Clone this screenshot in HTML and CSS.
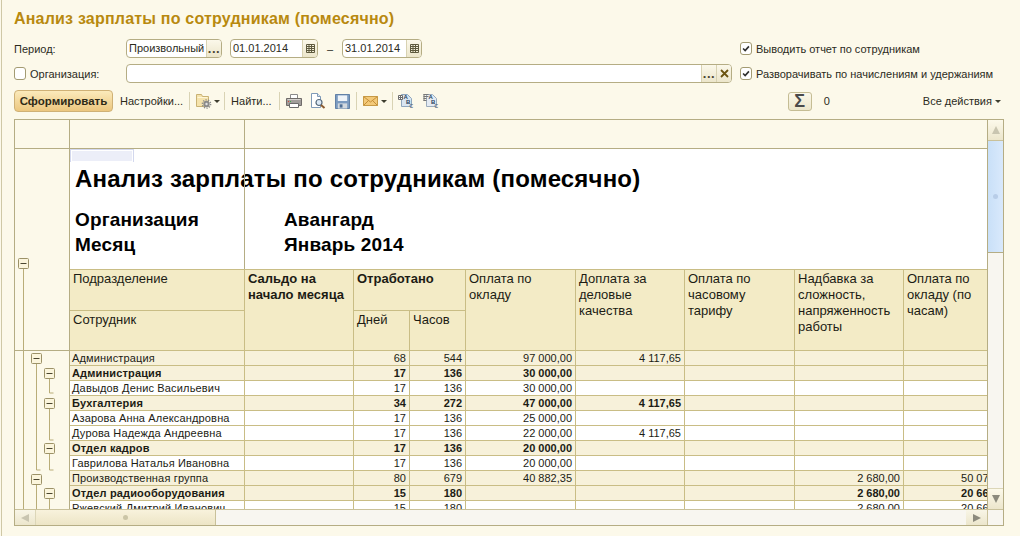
FILE: index.html
```html
<!DOCTYPE html>
<html lang="ru">
<head>
<meta charset="utf-8">
<title>Анализ зарплаты по сотрудникам (помесячно)</title>
<link rel="stylesheet" href="styles.css">
</head>
<body>
<div class="window">
  <h1 class="page-title">Анализ зарплаты по сотрудникам (помесячно)</h1>

  <div class="form-row form-row-first">
    <span class="label">Период:</span>
    <div class="field field-kind"><span class="field-text">Произвольный</span><span class="field-btn dots">...</span></div>
    <div class="field field-date field-from"><span class="field-text">01.01.2014</span><span class="field-btn"><svg class="cal" viewBox="0 0 11 11"><path d="M1.5 1.5h8v8h-8zM1.5 3.5h8M1.5 5.5h8M1.5 7.5h8M4 1.5v8M6.500 1.500v8" fill="none" stroke="#5e5a3e"/></svg></span></div>
    <span class="dash">–</span>
    <div class="field field-date field-to"><span class="field-text">31.01.2014</span><span class="field-btn"><svg class="cal" viewBox="0 0 11 11"><path d="M1.5 1.5h8v8h-8zM1.5 3.500h8M1.5 5.5h8M1.5 7.5h8M4 1.5v8M6.500 1.500v8" fill="none" stroke="#5e5a3e"/></svg></span></div>
    <label class="check check-right"><span class="box"><svg viewBox="0 0 12 12"><path d="M2.500 6l2.500 2.500 4.500-5" fill="none" stroke="#2f2f2f" stroke-width="2"/></svg></span>Выводить отчет по сотрудникам</label>
  </div>

  <div class="form-row form-row-second">
    <label class="check check-org"><span class="box"></span>Организация:</label>
    <div class="field field-org"><span class="field-text"></span><span class="field-btn dots">...</span><span class="field-btn clear"><svg viewBox="0 0 9 9"><path d="M1 1l7 7M8 1l-7 7" stroke="#6b5410" stroke-width="1.800" fill="none"/></svg></span></div>
    <label class="check check-right"><span class="box"><svg viewBox="0 0 12 12"><path d="M2.500 6l2.500 2.500 4.500-5" fill="none" stroke="#2f2f2f" stroke-width="2"/></svg></span>Разворачивать по начислениям и удержаниям</label>
  </div>

  <div class="toolbar">
    <button class="primary">Сформировать</button>
    <span class="tool-text tool-settings">Настройки...</span>
    <i class="sep sep-a"></i>
    <svg class="ico" viewBox="0 0 16 16"><path d="M.5 1.500h5l1 2h6v10H.5z" fill="#f5e3ac" stroke="#c9b274"/><path d="M1.500 4.500h10" stroke="#fff6d6"/><circle cx="10.500" cy="11" r="3.200" fill="#8b8b8b"/><circle cx="10.500" cy="11" r="4.200" fill="none" stroke="#8b8b8b" stroke-dasharray="1.300 1.300" stroke-width="1.300"/><circle cx="10.500" cy="11" r="1.200" fill="#e2e2e2"/></svg>
    <svg class="arrow" viewBox="0 0 6 3"><path d="M0 0h6L3 3z" fill="#3d3d2e"/></svg>
    <i class="sep sep-b"></i>
    <span class="tool-text">Найти...</span>
    <i class="sep sep-c"></i>
    <svg class="ico ico-print" viewBox="0 0 16 16"><path d="M4.500 1.500h7v4h-7z" fill="#fff" stroke="#8a8a8a"/><path d="M.5 5.500h15v7H.5z" fill="#a19d9b" stroke="#6f6b69"/><path d="M1.500 6.500h13" stroke="#d6d4d0"/><path d="M3.500 10.500h9v4h-9z" fill="#fff" stroke="#6c6c6c"/><path d="M2 8.500h1" stroke="#d8463c"/><path d="M4 8.500h1" stroke="#3fae4a"/></svg>
    <svg class="ico ico-prev" viewBox="0 0 16 16"><path d="M1.500.5h6l3 3v11h-9z" fill="#fff" stroke="#7f9ab8"/><path d="M7.500.5v3h3" fill="#dfe8f2" stroke="#7f9ab8"/><circle cx="9" cy="9.500" r="3" fill="#dbe9f6" stroke="#566a7c" stroke-width="1.200"/><path d="M11 12l3.500 3" stroke="#8a5a2e" stroke-width="2"/></svg>
    <svg class="ico ico-save" viewBox="0 0 16 16"><path d="M.5.5h15v15H.5z" fill="#7b9bc0" stroke="#5a7ba2"/><path d="M3 1.500h10v6H3z" fill="#eef3f8"/><path d="M3 10h10v5.500H3z" fill="#d2d9df"/><path d="M5 11h3v3.500H5z" fill="#4e6f96"/></svg>
    <i class="sep sep-d"></i>
    <svg class="ico ico-mail" viewBox="0 0 15 10"><path d="M.5.500h14v9H.500z" fill="#f3c978" stroke="#c79a45"/><path d="M.5.500l7 5.500 7-5.500M.5 9.500l5-5M14.500 9.500l-5-5" fill="none" stroke="#c58f38"/></svg>
    <svg class="arrow arrow-mail" viewBox="0 0 6 3"><path d="M0 0h6L3 3z" fill="#3d3d2e"/></svg>
    <i class="sep sep-e"></i>
    <svg class="ico ico-abc1" viewBox="0 0 16 16"><path d="M3.500 1.500h6l4 4v8h-10z" fill="#d9e5f1" stroke="#8fa6bd"/><path d="M.5 2.500h4v4h-4zM2.500 2.500v4M.5 4.500h4" fill="#fff" stroke="#6d6d6d"/><text x="5.500" y="5.500" class="mini">A</text><text x="8" y="10.500" class="mini">B</text><text x="11.500" y="15" class="mini mini-c">C</text></svg>
    <svg class="ico ico-abc2" viewBox="0 0 16 16"><path d="M3.500 1.500h6l4 4v8h-10z" fill="#e4ebf3" stroke="#9cacbc"/><path d="M.5 1.500h5M.5 3.500h5M.5 5.500h3M.5 7.500h3M1 1v7" fill="none" stroke="#777"/><text x="5.500" y="5.500" class="mini">A</text><text x="8" y="10.500" class="mini">B</text><text x="11.500" y="15" class="mini mini-c">C</text></svg>
    <button class="sigma">Σ</button>
    <span class="tool-text sum">0</span>
    <span class="tool-text all">Все действия</span>
    <svg class="arrow arrow-all" viewBox="0 0 6 3"><path d="M0 0h6L3 3z" fill="#3d3d2e"/></svg>
  </div>

  <div class="report">
    <div class="report-main">
      <div class="viewport">
        <div class="strip">
          <div class="strip-gutter"></div>
          <div class="strip-col"></div>
          <div class="strip-rest"></div>
        </div>
        <div class="content">
          <svg class="tree" viewBox="0 0 54 360" width="54" height="360">
            <g fill="none" stroke="#b9ad78">
              <path d="M8.500 119v241M21.500 214v107h4M34.500 229v15h4M34.500 259v32h4M34.500 304v17h4M21.500 335v25M34.500 349v11"/>
            </g>
            <path d="M0 201.500h54" stroke="#b5ad84"/>
            <g class="node"><rect x="3.500" y="109.500" width="10" height="10" rx="1"/><path d="M5.500 114.500h6"/></g>
            <g class="node"><rect x="16.500" y="204.500" width="10" height="10" rx="1"/><path d="M18.500 209.500h6"/></g>
            <g class="node"><rect x="29.500" y="219.500" width="10" height="10" rx="1"/><path d="M31.500 224.500h6"/></g>
            <g class="node"><rect x="29.500" y="249.500" width="10" height="10" rx="1"/><path d="M31.500 254.500h6"/></g>
            <g class="node"><rect x="29.500" y="294.500" width="10" height="10" rx="1"/><path d="M31.500 299.500h6"/></g>
            <g class="node"><rect x="16.500" y="325.500" width="10" height="10" rx="1"/><path d="M18.500 330.500h6"/></g>
            <g class="node"><rect x="29.500" y="339.500" width="10" height="10" rx="1"/><path d="M31.500 344.500h6"/></g>
          </svg>
          <div class="sheet">
            <div class="sheet-head">
              <div class="cell-mark"></div>
              <h2 class="report-title">Анализ зарплаты по сотрудникам (помесячно)</h2>
              <div class="meta"><span>Организация</span><span>Авангард</span><span>Месяц</span><span>Январь 2014</span></div>
            </div>
            <table class="data">
              <colgroup>
                <col class="c175"><col class="c109"><col class="c56"><col class="c56"><col class="c110"><col class="c109"><col class="c110"><col class="c109"><col class="c110">
              </colgroup>
              <thead>
                <tr class="h1">
                  <th>Подразделение</th>
                  <th rowspan="2" class="b">Сальдо на начало месяца</th>
                  <th colspan="2" class="b">Отработано</th>
                  <th rowspan="2">Оплата по окладу</th>
                  <th rowspan="2">Доплата за деловые качества</th>
                  <th rowspan="2">Оплата по часовому тарифу</th>
                  <th rowspan="2">Надбавка за сложность, напряженность работы</th>
                  <th rowspan="2">Оплата по окладу (по часам)</th>
                </tr>
                <tr class="h2">
                  <th>Сотрудник</th>
                  <th>Дней</th>
                  <th>Часов</th>
                </tr>
              </thead>
              <tbody>
                <tr class="tint"><td>Администрация</td><td></td><td>68</td><td>544</td><td>97 000,00</td><td>4 117,65</td><td></td><td></td><td></td></tr>
                <tr class="tint bold"><td>Администрация</td><td></td><td>17</td><td>136</td><td>30 000,00</td><td></td><td></td><td></td><td></td></tr>
                <tr><td>Давыдов Денис Васильевич</td><td></td><td>17</td><td>136</td><td>30 000,00</td><td></td><td></td><td></td><td></td></tr>
                <tr class="tint bold"><td>Бухгалтерия</td><td></td><td>34</td><td>272</td><td>47 000,00</td><td>4 117,65</td><td></td><td></td><td></td></tr>
                <tr><td>Азарова Анна Александровна</td><td></td><td>17</td><td>136</td><td>25 000,00</td><td></td><td></td><td></td><td></td></tr>
                <tr><td>Дурова Надежда Андреевна</td><td></td><td>17</td><td>136</td><td>22 000,00</td><td>4 117,65</td><td></td><td></td><td></td></tr>
                <tr class="tint bold"><td>Отдел кадров</td><td></td><td>17</td><td>136</td><td>20 000,00</td><td></td><td></td><td></td><td></td></tr>
                <tr><td>Гаврилова Наталья Ивановна</td><td></td><td>17</td><td>136</td><td>20 000,00</td><td></td><td></td><td></td><td></td></tr>
                <tr class="tint"><td>Производственная группа</td><td></td><td>80</td><td>679</td><td>40 882,35</td><td></td><td></td><td>2 680,00</td><td>50 070,00</td></tr>
                <tr class="tint bold"><td>Отдел радиооборудования</td><td></td><td>15</td><td>180</td><td></td><td></td><td></td><td>2 680,00</td><td>20 660,00</td></tr>
                <tr><td>Ржевский Дмитрий Иванович</td><td></td><td>15</td><td>180</td><td></td><td></td><td></td><td>2 680,00</td><td>20 660,00</td></tr>
              </tbody>
            </table>
          </div>
        </div>
      </div>
      <div class="vscroll">
        <div class="sb-btn sb-up"><svg viewBox="0 0 8 8"><path d="M4 0l4 8H0z" fill="#c9c5b0"/></svg></div>
        <div class="sb-vthumb"><i class="grip"></i></div>
        <div class="sb-track"></div>
        <div class="sb-btn sb-down"><svg viewBox="0 0 8 8"><path d="M4 8L0 0h8z" fill="#8c8a7c"/></svg></div>
      </div>
    </div>
    <div class="hscroll">
      <div class="sb-hbtn"><svg viewBox="0 0 8 8"><path d="M0 4l8-4v8z" fill="#c9c5b0"/></svg></div>
      <div class="sb-hthumb"><i class="grip grip-h"></i></div>
      <div class="sb-htrack"></div>
      <div class="sb-hbtn sb-hbtn-r"><svg viewBox="0 0 8 8"><path d="M8 4L0 0v8z" fill="#8c8a7c"/></svg></div>
      <div class="sb-corner"></div>
    </div>
  </div>
</div>
</body>
</html>
```

FILE: styles.css
```css
* { box-sizing: border-box; }
html, body { margin: 0; padding: 0; }
body {
  width: 1020px;
  height: 536px;
  overflow: hidden;
  background: #fcf9ea;
  font-family: "Liberation Sans", Arial, sans-serif;
  font-size: 11px;
  color: #2b2b1c;
}
.window {
  margin-left: 1px;
  height: 536px;
  border-left: 1px solid #cfc8a6;
  padding-left: 12px;
}
.page-title {
  margin: 0;
  padding-top: 9px;
  height: 39px;
  font-size: 16px;
  line-height: 20px;
  font-weight: bold;
  color: #b8890f;
  letter-spacing: 0.2px;
}
.form-row { display: flex; align-items: center; height: 19px; position: relative; }
.form-row-second { margin-top: 6px; }
.label { width: 112px; }
.field {
  display: flex;
  height: 19px;
  background: #fff;
  border: 1px solid #b5ad84;
  border-radius: 4px;
  overflow: hidden;
  line-height: 17px;
}
.field-text { flex: 1; padding-left: 2px; white-space: nowrap; overflow: hidden; }
.field-btn {
  width: 15px;
  border-left: 1px solid #d8d2b2;
  background: linear-gradient(#fbf8ea, #ece6cb);
  display: flex;
  align-items: center;
  justify-content: center;
}
.field-btn svg { display: block; }
.cal { width: 11px; height: 11px; }
.clear svg { width: 9px; height: 9px; }
.dots {
  font-size: 13px;
  font-weight: bold;
  letter-spacing: 0.6px;
  line-height: 18px;
  color: #4a4630;
  align-items: flex-start;
}
.field-kind { width: 96px; }
.field-from { width: 88px; margin-left: 8px; }
.field-to { width: 80px; }
.dash { width: 24px; text-align: center; }
.field-org { width: 606px; }
.check { display: flex; align-items: center; gap: 4px; white-space: nowrap; }
.box {
  width: 12px;
  height: 13px;
  background: #fff;
  border: 1px solid #a39b72;
  border-radius: 3px;
  display: block;
}
.box svg { display: block; width: 10px; height: 11px; }
.check-right { margin-left: 8px; }
.form-row-first .check-right { margin-left: 318px; }
.check-org { width: 112px; }
.toolbar {
  display: flex;
  align-items: center;
  height: 22px;
  margin-top: 7px;
  margin-bottom: 7px;
}
.primary {
  width: 99px;
  height: 22px;
  padding: 0;
  font: bold 11.500px "Liberation Sans", Arial, sans-serif;
  color: #2e2a16;
  background: linear-gradient(#fbeabb, #ecc77f);
  border: 1px solid #cfb176;
  border-radius: 4px;
}
.tool-text { white-space: nowrap; }
.tool-settings { margin-left: 7px; }
.sep { display: block; width: 1px; height: 18px; background: #d9d3b4; margin: 0 6px; flex: none; }
.ico { width: 16px; height: 16px; display: block; flex: none; }
.arrow { width: 6px; height: 3px; display: block; flex: none; margin-left: 2px; }
.sep-b { margin-left: 4px; }
.sep-c { margin-left: 7px; }
.ico-prev { margin-left: 8px; }
.ico-save { margin-left: 9px; width: 15px; height: 15px; }
.ico-mail { width: 15px; height: 10px; }
.arrow-mail { margin-left: 3px; }
.sep-e { margin-left: 5px; margin-right: 5px; }
.ico-abc2 { margin-left: 9px; }
.mini { font: bold 6px "Liberation Sans", Arial, sans-serif; fill: #27425f; }
.mini-c { font-size: 5px; fill: #5d6f80; }
.sigma {
  margin-left: 349px;
  width: 24px;
  height: 19px;
  padding: 0;
  background: linear-gradient(#fbf8ea, #ece6cb);
  border: 1px solid #c5bd94;
  border-radius: 3px;
  font: bold 18px/16px "Liberation Sans", Arial, sans-serif;
  color: #4a4a4a;
}
.sum { margin-left: 12px; }
.all { margin-left: 93px; }
.arrow-all { margin-left: 3px; }
.report {
  width: 990px;
  height: 407px;
  border: 1px solid #b5ad84;
  display: flex;
  flex-direction: column;
}
.report-main { display: flex; height: 389px; }
.viewport { width: 972px; height: 389px; overflow: hidden; }
.strip { display: flex; height: 29px; border-bottom: 1px solid #b5ad84; }
.strip-gutter { width: 55px; border-right: 1px solid #b5ad84; }
.strip-col { width: 175px; border-right: 1px solid #b5ad84; }
.strip-rest { flex: 1; }
.content { display: flex; height: 360px; }
.tree { flex: none; width: 54px; height: 360px; display: block; }
.node rect { fill: #fbf5dc; stroke: #9c9268; }
.node path { stroke: #4b4630; fill: none; }
.sheet {
  width: 918px;
  height: 360px;
  overflow: hidden;
  border-left: 1px solid #b5ad84;
  background: #fff;
}
.sheet-head { height: 120px; padding: 17px 0 0 5px; position: relative; }
.sheet-head::after {
  content: "";
  position: absolute;
  left: 174px;
  top: 0;
  bottom: 0;
  width: 1px;
  background: #b5ad84;
}
.cell-mark {
  position: absolute;
  left: 0;
  top: 0;
  width: 64px;
  height: 13px;
  background: #d3d8ee;
}
.cell-mark::before {
  content: "";
  position: absolute;
  left: 1px;
  top: 1px;
  width: 60px;
  height: 10px;
  background: #eceef8;
  border: 1px solid #fff;
}
.report-title {
  margin: 0;
  height: 26px;
  font-size: 24px;
  line-height: 26px;
  font-weight: bold;
  color: #000;
  white-space: nowrap;
  letter-spacing: 0.18px;
}
.meta {
  display: grid;
  grid-template-columns: 209px auto;
  margin-top: 15px;
  font-size: 19px;
  line-height: 25px;
  font-weight: bold;
  color: #000;
  letter-spacing: 0.15px;
}
.data {
  width: 944px;
  table-layout: fixed;
  border-collapse: separate;
  border-spacing: 0;
  border-top: 1px solid #c9bd85;
  color: #1c1c14;
}
.c175 { width: 175px; }
.c109 { width: 109px; }
.c56 { width: 56px; }
.c110 { width: 110px; }
.data th, .data td { border-right: 1px solid #c9bd85; border-bottom: 1px solid #c9bd85; }
.data th {
  background: #f3ebc6;
  padding: 1px 2px 0 3px;
  font-size: 13px;
  line-height: 16px;
  font-weight: normal;
  text-align: left;
  vertical-align: top;
  overflow: hidden;
}
.data th.b { font-weight: bold; }
.h1 { height: 41px; }
.h2 { height: 40px; }
.data td {
  height: 15px;
  padding: 0 3px 0 2px;
  font-size: 11px;
  line-height: 14px;
  text-align: right;
  white-space: nowrap;
  overflow: hidden;
}
.data td:first-child { text-align: left; letter-spacing: 0.16px; }
.tint td { background: #f7f1da; }
.bold td { font-weight: bold; }
.vscroll {
  width: 16px;
  height: 389px;
  border-left: 1px solid #b5ad84;
  display: flex;
  flex-direction: column;
  background: #f8f6f0;
}
.sb-btn {
  flex: none;
  display: flex;
  align-items: center;
  justify-content: center;
  background: linear-gradient(#fcf9ea, #ece6cc);
}
.sb-btn svg { width: 8px; height: 8px; display: block; }
.sb-up { height: 21px; border-bottom: 1px solid #c9c19a; }
.sb-down { height: 21px; border-top: 1px solid #dcd6b8; }
.sb-vthumb {
  height: 112px;
  flex: none;
  background: linear-gradient(90deg, #c9e0f8, #d9e9fc);
  border-bottom: 1px solid #b5ad84;
  display: flex;
  align-items: center;
  justify-content: center;
}
.sb-track { flex: 1; }
.grip { display: block; width: 5px; height: 5px; border-radius: 50%; background: #b8cde8; }
.grip-h { background: #cbc5a6; }
.hscroll {
  display: flex;
  height: 16px;
  border-top: 1px solid #c9c19a;
  background: #f8f6f0;
}
.sb-hbtn {
  width: 20px;
  flex: none;
  display: flex;
  align-items: center;
  justify-content: center;
  background: linear-gradient(#f8f5e6, #ece6cc);
}
.sb-hbtn svg { width: 8px; height: 8px; display: block; }
.sb-hthumb {
  width: 181px;
  flex: none;
  background: linear-gradient(#f8f2dc, #ede5c6);
  border-left: 1px solid #dcd6b8;
  border-right: 1px solid #c9c19a;
  display: flex;
  align-items: center;
  justify-content: center;
}
.sb-htrack { flex: 1; }
.sb-hbtn-r { width: 21px; }
.sb-corner { width: 16px; flex: none; border-left: 1px solid #c9c19a; }
```
